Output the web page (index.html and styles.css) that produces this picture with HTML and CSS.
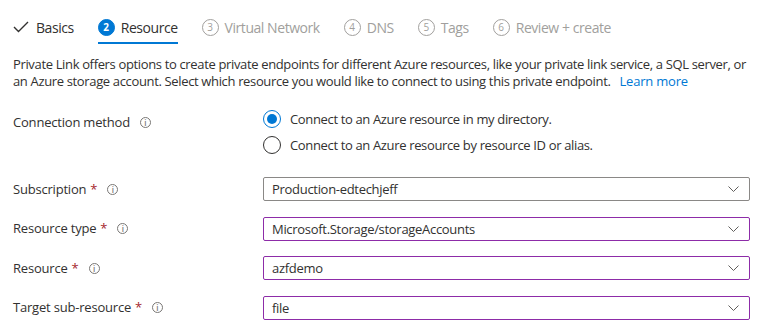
FILE: index.html
```html
<!DOCTYPE html>
<html lang="en">
<head>
<meta charset="UTF-8">
<meta name="viewport" content="width=device-width, initial-scale=1.0">
<title>Create a private endpoint - Resource</title>
<link rel="stylesheet" href="styles.css">
</head>
<body>
<nav class="steps">
  <a class="step done" href="#">
    <svg class="check" width="16" height="12" viewBox="0 0 16 12"><polyline points="1,6 5.5,10.5 15,1" fill="none" stroke="#323130" stroke-width="1.4"/></svg>
    Basics
  </a>
  <a class="step active" href="#"><span class="num">2</span> Resource</a>
  <a class="step" href="#"><span class="num">3</span> Virtual Network</a>
  <a class="step" href="#"><span class="num">4</span> DNS</a>
  <a class="step" href="#"><span class="num">5</span> Tags</a>
  <a class="step" href="#"><span class="num">6</span> Review + create</a>
</nav>

<main class="content">
  <p class="intro">Private Link offers options to create private endpoints for different Azure resources, like your private link service, a SQL server, or an Azure storage account. Select which resource you would like to connect to using this private endpoint. <a href="#">Learn more</a></p>

  <div class="form">
    <!-- CONNECTION METHOD -->
    <div class="label top">Connection method <span class="info">i</span></div>
    <div class="radios">
      <label class="radio checked"><span class="dot"></span>Connect to an Azure resource in my directory.</label>
      <label class="radio"><span class="dot"></span>Connect to an Azure resource by resource ID or alias.</label>
    </div>

    <!-- FIELDS -->
    <div class="fields">
      <div class="label">Subscription <span class="req">*</span> <span class="info">i</span></div>
      <div class="select">Production-edtechjeff<svg class="chev" width="11" height="6" viewBox="0 0 11 6"><polyline points="0.5,0.5 5.5,5.5 10.5,0.5" fill="none" stroke="#605e5c"/></svg></div>

      <div class="label">Resource type <span class="req">*</span> <span class="info">i</span></div>
      <div class="select dirty">Microsoft.Storage/storageAccounts<svg class="chev" width="11" height="6" viewBox="0 0 11 6"><polyline points="0.5,0.5 5.5,5.5 10.5,0.5" fill="none" stroke="#605e5c"/></svg></div>

      <div class="label">Resource <span class="req">*</span> <span class="info">i</span></div>
      <div class="select dirty">azfdemo<svg class="chev" width="11" height="6" viewBox="0 0 11 6"><polyline points="0.5,0.5 5.5,5.5 10.5,0.5" fill="none" stroke="#605e5c"/></svg></div>

      <div class="label">Target sub-resource <span class="req">*</span> <span class="info">i</span></div>
      <div class="select dirty">file<svg class="chev" width="11" height="6" viewBox="0 0 11 6"><polyline points="0.5,0.5 5.5,5.5 10.5,0.5" fill="none" stroke="#605e5c"/></svg></div>
    </div>
  </div>
</main>
</body>
</html>
```

FILE: styles.css
```css
:root { --text:#323130; --muted:#a19f9d; --blue:#0078d4; --red:#a4262c; --grey:#8a8886; --purple:#8d2ca8; }
* { margin:0; padding:0; box-sizing:border-box; }
body { font-family:'Open Sans','Noto Sans',sans-serif; font-size:13px; color:var(--text); background:#fff; }

/* STEPS */
.steps { display:flex; height:44px; padding-left:13px; gap:24px; }
.step { display:flex; align-items:center; gap:6px; padding-top:12px; border-bottom:2px solid transparent; text-decoration:none; color:var(--muted); font-size:14px; letter-spacing:-0.45px; white-space:nowrap; }
.step.done { color:var(--text); gap:7px; }
.step.active { color:var(--text); border-bottom-color:var(--blue); }
.num { width:17px; height:17px; border-radius:50%; border:1px solid var(--muted); display:flex; align-items:center; justify-content:center; font-size:10px; letter-spacing:0; }
.active .num { background:var(--blue); border-color:var(--blue); color:#fff; font-weight:700; }

/* CONTENT */
.content { padding:12px 20px 0 13px; }
.intro { line-height:17px; letter-spacing:-0.35px; }
.intro a { color:var(--blue); text-decoration:none; margin-left:6px; letter-spacing:-0.2px; }

.form { display:grid; grid-template-columns:250px 1fr; margin-top:16px; margin-right:3px; }
.label { display:flex; align-items:center; gap:4px; line-height:17px; letter-spacing:-0.2px; }
.label.top { padding-top:8px; align-self:start; }
.req { color:var(--red); }
.info { width:11px; height:11px; border-radius:50%; border:1px solid #797775; color:#797775; font-size:8px; line-height:9px; text-align:center; margin-left:6px; font-weight:600; letter-spacing:0; }

.radios { display:flex; flex-direction:column; }
.radio { display:flex; align-items:center; gap:9px; height:26px; letter-spacing:-0.35px; }
.dot { width:18px; height:18px; border-radius:50%; border:1px solid var(--text); display:flex; align-items:center; justify-content:center; }
.radio.checked .dot { border-color:var(--blue); }
.radio.checked .dot::after { content:''; width:10px; height:10px; border-radius:50%; background:var(--blue); }

.fields { grid-column:1 / 3; display:grid; grid-template-columns:250px 1fr; row-gap:15.5px; margin-top:19px; }
.select { height:24px; border:1px solid var(--grey); border-radius:2px; padding:0 10px 0 8px; display:flex; align-items:center; justify-content:space-between; letter-spacing:-0.3px; }
.select.dirty { border-color:var(--purple); }
```
